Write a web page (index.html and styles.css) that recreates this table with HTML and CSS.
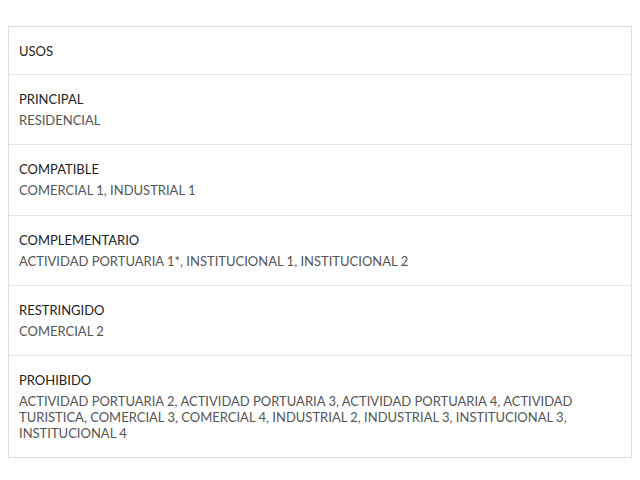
FILE: index.html
```html
<!DOCTYPE html>
<html>
<head>
<meta charset="utf-8">
<link rel="stylesheet" href="styles.css">
</head>
<body>
<div class="card">
  <div class="card-header">USOS</div>
  <div class="row">
    <div class="label">PRINCIPAL</div>
    <div class="value">RESIDENCIAL</div>
  </div>
  <div class="row">
    <div class="label">COMPATIBLE</div>
    <div class="value">COMERCIAL 1, INDUSTRIAL 1</div>
  </div>
  <div class="row">
    <div class="label">COMPLEMENTARIO</div>
    <div class="value">ACTIVIDAD PORTUARIA 1*, INSTITUCIONAL 1, INSTITUCIONAL 2</div>
  </div>
  <div class="row">
    <div class="label">RESTRINGIDO</div>
    <div class="value">COMERCIAL 2</div>
  </div>
  <div class="row">
    <div class="label">PROHIBIDO</div>
    <div class="value">ACTIVIDAD PORTUARIA 2, ACTIVIDAD PORTUARIA 3, ACTIVIDAD PORTUARIA 4, ACTIVIDAD TURISTICA, COMERCIAL 3, COMERCIAL 4, INDUSTRIAL 2, INDUSTRIAL 3, INSTITUCIONAL 3, INSTITUCIONAL 4</div>
  </div>
</div>
</body>
</html>
```

FILE: styles.css
```css
body {
  margin: 8px;
  background: #fff;
  font-family: Lato, "Open Sans", sans-serif;
}
.card {
  margin-top: 18px;
  border: 1px solid #dedede;
  box-shadow: 0 1px 2px rgba(0,0,0,0.06);
  background: #fff;
}
.card-header {
  height: 47px;
  display: flex;
  align-items: center;
  padding: 0 10px;
  font-size: 13px;
  color: #222;
  border-bottom: 1px solid #e6e6e6;
}
.row {
  padding: 15px 10px 16.3px;
  border-bottom: 1px solid #e6e6e6;
}
.row:last-child {
  border-bottom: none;
  padding-bottom: 16px;
}
.label {
  font-size: 13px;
  line-height: 18px;
  color: #222;
}
.value {
  margin-top: 4px;
  font-size: 13px;
  line-height: 16px;
  color: #555;
}
```
